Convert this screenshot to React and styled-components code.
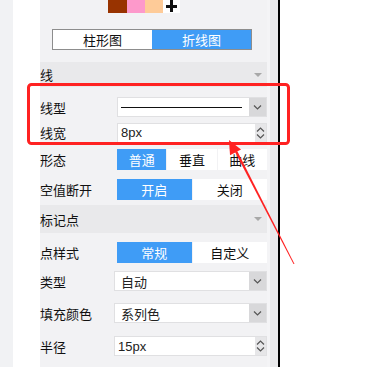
import React from "react";
import styled, { createGlobalStyle } from "styled-components";

const GlobalStyle = createGlobalStyle`
	body {
		margin: 0;
		background: #fff;
		font-family: "Noto Sans CJK SC", "Liberation Sans", sans-serif;
	}
`;

const Page = styled.div`
	position: relative;
	display: flex;
	width: 373px;
	height: 367px;
	overflow: hidden;
	background: #fff;
`;

const Strip = styled.div`
	width: ${props => props.w}px;
	flex-shrink: 0;
	background: ${props => props.bg};
`;

const Panel = styled.div`
	width: 227px;
	flex-shrink: 0;
	display: flex;
	flex-direction: column;
	background: #f2f2f4;
	color: #111;
	font-size: 13px;
`;

const Scrollbar = styled.div`
	width: 11px;
	flex-shrink: 0;
	background: #e9e9eb;
	border-left: 3px solid #f4f4f6;
	box-sizing: border-box;
`;

const Divider = styled.div`
	width: 2px;
	flex-shrink: 0;
	background: #000;
`;

const Swatches = styled.div`
	display: flex;
	align-items: center;
	height: 13px;
	padding-left: 68px;
`;

const Swatch = styled.div`
	width: ${props => props.w || 18}px;
	height: 13px;
	background: ${props => props.color};
`;

const Plus = styled.div`
	width: 17px;
	height: 13px;
	background: #fff;
	position: relative;

	&::before,
	&::after {
		content: "";
		position: absolute;
		background: #111;
	}
	&::before {
		left: 3px;
		top: 5px;
		width: 11px;
		height: 3px;
	}
	&::after {
		left: 7px;
		top: 0;
		width: 3px;
		height: 12px;
	}
`;

const Tabs = styled.div`
	display: flex;
	margin: 16px 0 0 12px;
	width: 200px;
	height: 21px;
	border: 1px solid #8d8d8d;
	box-sizing: border-box;
`;

const Tab = styled.div`
	flex: 1;
	display: flex;
	align-items: center;
	justify-content: center;
	background: ${props => (props.active ? "#3f9cf6" : "#fff")};
	color: ${props => (props.active ? "#fff" : "#111")};
	font-size: 13px;
`;

const Header = styled.div`
	display: flex;
	align-items: center;
	justify-content: space-between;
	height: ${props => props.h}px;
	margin-top: ${props => props.top || 0}px;
	padding-right: 5px;
	background: #e9e9eb;
	font-size: 13px;
`;

const Caret = styled.span`
	width: 0;
	height: 0;
	border-left: 4px solid transparent;
	border-right: 4px solid transparent;
	border-top: 4px solid #a8a8a8;
`;

const Group = styled.div`
	padding-top: ${props => props.pad || 0}px;
`;

const Row = styled.div`
	display: flex;
	align-items: center;
	height: ${props => props.h}px;
`;

const Label = styled.div`
	width: ${props => props.w || 77}px;
	flex-shrink: 0;
	white-space: nowrap;
`;

const Field = styled.div`
	flex: 1;
	display: flex;
	height: 20px;
	background: #fff;
	border: 1px solid #e0e0e2;
	box-sizing: border-box;
	font-size: 13px;
	color: #222;
`;

const Value = styled.div`
	flex: 1;
	display: flex;
	align-items: center;
	padding-left: ${props => (props.cjk ? 6 : 3)}px;
	font-family: ${props =>
		props.cjk ? '"Noto Sans CJK SC", sans-serif' : '"Liberation Sans", sans-serif'};
`;

const LineSample = styled.div`
	flex: 1;
	height: 1px;
	margin: 0 7px 0 0;
	background: #111;
`;

const DropButton = styled.div`
	width: 17px;
	display: flex;
	align-items: center;
	justify-content: center;
	background: #d8d8da;
`;

const Spinner = styled.div`
	width: 11px;
	display: flex;
	flex-direction: column;
	align-items: center;
	justify-content: center;
	gap: 2px;
	background: #e6e6e8;
`;

const Segments = styled.div`
	flex: 1;
	display: flex;
	height: 21px;
	gap: 1px;
`;

const Segment = styled.div`
	flex: 1;
	display: flex;
	align-items: center;
	justify-content: center;
	background: ${props => (props.active ? "#3f9cf6" : "#fff")};
	color: ${props => (props.active ? "#fff" : "#111")};
`;

const Overlay = styled.svg`
	position: absolute;
	left: 0;
	top: 0;
	pointer-events: none;
`;

const Chevron = ({ up }) => (
	<svg width="9" height="5" viewBox="0 0 9 5">
		<path
			d={up ? "M1 4.5 L4.5 1 L8 4.5" : "M1 0.5 L4.5 4 L8 0.5"}
			fill="none"
			stroke="#555"
			strokeWidth="1.2"
		/>
	</svg>
);

const Select = ({ children }) => (
	<Field>
		{children}
		<DropButton>
			<Chevron />
		</DropButton>
	</Field>
);

const NumberInput = ({ value }) => (
	<Field>
		<Value>{value}</Value>
		<Spinner>
			<Chevron up />
			<Chevron />
		</Spinner>
	</Field>
);

const App = () => (
	<Page>
		<GlobalStyle />
		<Strip w={13} bg="#f1f2f4" />
		<Strip w={27} bg="#fff" />
		<Panel>
			<Swatches>
				<Swatch color="#983300" w={19} />
				<Swatch color="#fd99cb" />
				<Swatch color="#fecb98" />
				<Plus />
			</Swatches>
			<Tabs>
				<Tab>柱形图</Tab>
				<Tab active>折线图</Tab>
			</Tabs>
			<Header h={25} top={12}>
				线
				<Caret />
			</Header>
			<Group pad={7}>
				<Row h={26}>
					<Label>线型</Label>
					<Select>
						<Value>
							<LineSample />
						</Value>
					</Select>
				</Row>
				<Row h={25}>
					<Label>线宽</Label>
					<NumberInput value="8px" />
				</Row>
				<Row h={28}>
					<Label>形态</Label>
					<Segments>
						<Segment active>普通</Segment>
						<Segment>垂直</Segment>
						<Segment>曲线</Segment>
					</Segments>
				</Row>
				<Row h={32}>
					<Label>空值断开</Label>
					<Segments>
						<Segment active>开启</Segment>
						<Segment>关闭</Segment>
					</Segments>
				</Row>
			</Group>
			<Header h={28}>
				标记点
				<Caret />
			</Header>
			<Group pad={6}>
				<Row h={26}>
					<Label>点样式</Label>
					<Segments>
						<Segment active>常规</Segment>
						<Segment>自定义</Segment>
					</Segments>
				</Row>
				<Row h={32}>
					<Label w={74}>类型</Label>
					<Select>
						<Value cjk>自动</Value>
					</Select>
				</Row>
				<Row h={32}>
					<Label w={74}>填充颜色</Label>
					<Select>
						<Value cjk>系列色</Value>
					</Select>
				</Row>
				<Row h={34}>
					<Label w={74}>半径</Label>
					<NumberInput value="15px" />
				</Row>
			</Group>
		</Panel>
		<Scrollbar />
		<Divider />
		<Overlay width="373" height="367" viewBox="0 0 373 367">
			<rect
				x="28.5"
				y="84.5"
				width="260"
				height="59"
				rx="3"
				fill="none"
				stroke="#ff2222"
				strokeWidth="3"
			/>
			<polygon points="229,140 241,149.6 230,155.2" fill="#ff2222" />
			<polygon points="234,150 237.5,151.5 294.5,264 293.5,264" fill="#ff2222" />
		</Overlay>
	</Page>
);

export default App;
